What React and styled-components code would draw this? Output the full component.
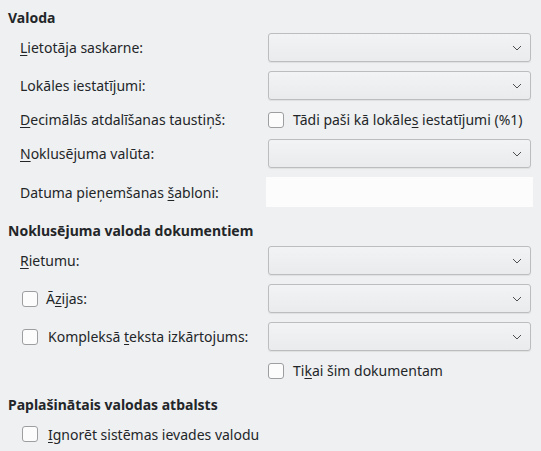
import React from "react";
import styled, { createGlobalStyle } from "styled-components";

const GlobalStyle = createGlobalStyle`
  html, body {
    margin: 0;
    background: #eff0f1;
  }
  body {
    font-family: "Noto Sans", "DejaVu Sans", sans-serif;
    font-size: 14px;
    color: #232629;
  }
`;

const Page = styled.div`
  width: 541px;
  height: 451px;
  box-sizing: border-box;
  padding: 8px 10px 0 8px;
  display: flex;
  flex-direction: column;
  gap: 14px;
`;

const Section = styled.section`
  display: flex;
  flex-direction: column;
`;

const Title = styled.h3`
  margin: 0 0 6px 0;
  font-size: 14px;
  font-weight: 700;
  line-height: 19px;
`;

const FormGrid = styled.div`
  display: grid;
  grid-template-columns: 248px 263px;
  row-gap: 9px;
  align-items: center;
  padding-left: 12px;
`;

const Label = styled.span`
  line-height: 19px;
  white-space: nowrap;
`;

const Mn = styled.span`
  text-decoration: underline;
  text-underline-offset: 2px;
`;

const Combo = styled.div`
  height: 29px;
  box-sizing: border-box;
  border: 1px solid #bbbdbf;
  border-radius: 3px;
  background: linear-gradient(#f2f3f4, #eaebec);
  box-shadow: 0 1px 1px rgba(0, 0, 0, 0.07);
  display: flex;
  align-items: center;
  justify-content: flex-end;
  padding-right: 8px;
`;

const TextField = styled.div`
  height: 30px;
  margin: 0 -2px;
  background: #fcfcfc;
`;

const CheckRow = styled.label`
  display: flex;
  align-items: center;
  gap: ${({ $gap }) => $gap || 9}px;
  height: ${({ $h }) => $h || 21}px;
  grid-column: ${({ $col }) => $col || "auto"};
  padding-left: ${({ $inset }) => $inset || 0}px;
  white-space: nowrap;
`;

const Box = styled.span`
  width: 16px;
  height: 16px;
  box-sizing: border-box;
  border: 1px solid #9c9ea0;
  border-radius: 3px;
  background: #fcfcfc;
  flex-shrink: 0;
`;

function Chevron() {
  return (
    <svg width="10" height="6" viewBox="0 0 10 6">
      <path d="M1 1l4 4 4-4" fill="none" stroke="#4d4f52" strokeWidth="1" />
    </svg>
  );
}

function Select() {
  return (
    <Combo>
      <Chevron />
    </Combo>
  );
}

function Check({ children, col, h, inset, gap }) {
  return (
    <CheckRow $col={col} $h={h} $inset={inset} $gap={gap}>
      <Box />
      <span>{children}</span>
    </CheckRow>
  );
}

export default function App() {
  return (
    <>
      <GlobalStyle />
      <Page>
        <Section>
          <Title>Valoda</Title>
          <FormGrid>
            <Label>
              <Mn>L</Mn>ietotāja saskarne:
            </Label>
            <Select />
            <Label>
              Lokāles iestatī<Mn>j</Mn>umi:
            </Label>
            <Select />
            <Label>
              <Mn>D</Mn>ecimālās atdalīšanas taustiņš:
            </Label>
            <Check>
              Tādi paši kā lokāle<Mn>s</Mn> iestatījumi (%1)
            </Check>
            <Label>
              <Mn>N</Mn>oklusējuma valūta:
            </Label>
            <Select />
            <Label>
              Datuma pieņemšanas <Mn>š</Mn>abloni:
            </Label>
            <TextField />
          </FormGrid>
        </Section>

        <Section>
          <Title>Noklusējuma valoda dokumentiem</Title>
          <FormGrid>
            <Label>
              <Mn>R</Mn>ietumu:
            </Label>
            <Select />
            <Check inset={2} gap={8}>
              Ā<Mn>z</Mn>ijas:
            </Check>
            <Select />
            <Check inset={2} gap={10}>
              Kompleksā <Mn>t</Mn>eksta izkārtojums:
            </Check>
            <Select />
            <Check col="2">
              Ti<Mn>k</Mn>ai šim dokumentam
            </Check>
          </FormGrid>
        </Section>

        <Section>
          <Title>Paplašinātais valodas atbalsts</Title>
          <Check h={28} inset={14} gap={10}>
            <Mn>I</Mn>gnorēt sistēmas ievades valodu
          </Check>
        </Section>
      </Page>
    </>
  );
}
